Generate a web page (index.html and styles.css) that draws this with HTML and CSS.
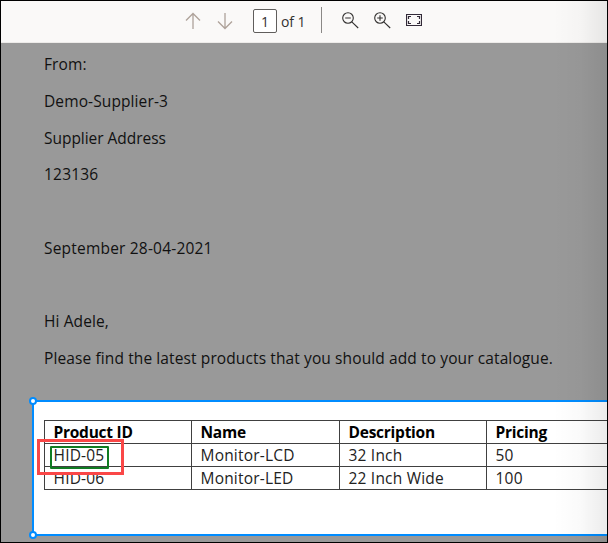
FILE: index.html
```html
<!DOCTYPE html>
<html lang="en">
<head>
<meta charset="utf-8">
<title>Document viewer</title>
<link rel="stylesheet" href="styles.css">
</head>
<body>
<div class="viewer">
  <header class="toolbar">
    <svg class="arrow" width="16" height="18" viewBox="0 0 16 18"><path d="M8 17V1.5M1 8.5l7-7 7 7"/></svg>
    <svg class="arrow down" width="16" height="18" viewBox="0 0 16 18"><path d="M8 1v15.5M1 9.5l7 7 7-7"/></svg>
    <span class="page-number">1</span>
    <span class="page-total">of 1</span>
    <span class="divider"></span>
    <svg class="tool" width="17" height="17" viewBox="0 0 17 17"><circle cx="6" cy="6" r="5.3"/><path d="M9.8 9.8l6.4 6.2M3.2 6h5.6"/></svg>
    <svg class="tool" width="17" height="17" viewBox="0 0 17 17"><circle cx="6" cy="6" r="5.3"/><path d="M9.8 9.8l6.4 6.2M3.2 6h5.6M6 3.2v5.6"/></svg>
    <svg class="tool fit" width="16" height="12" viewBox="0 0 16 12"><path d="M.5.5h15v11H.5zM2.5 5V2.5H5M11 2.5h2.500V5M13.500 7v2.500H11M5 9.500H2.500V7"/></svg>
  </header>
  <main class="document">
    <div class="letter">
      <p>From:</p>
      <p>Demo-Supplier-3</p>
      <p class="tight">Supplier Address</p>
      <p class="digits">123136</p>
      <p></p>
      <p class="digits">September 28-04-2021</p>
      <p></p>
      <p>Hi Adele,</p>
      <p>Please find the latest products that you should add to your catalogue.</p>
    </div>
    <section class="selection">
      <span class="handle top"></span><span class="handle bottom"></span>
      <div class="table">
        <b>Product ID</b><b>Name</b><b>Description</b><b>Pricing</b>
        <span>HID-05</span><span>Monitor-LCD</span><span>32 Inch</span><span>50</span>
        <span>HID-06</span><span>Monitor-LED</span><span>22 Inch Wide</span><span>100</span>
      </div>
      <div class="field"></div>
      <div class="callout"></div>
    </section>
  </main>
  <div class="shade"></div>
</div>
</body>
</html>
```
FILE: styles.css
```css
* { box-sizing: border-box; }
body { margin: 0; font-family: "Open Sans", sans-serif; font-size: 15.5px; font-weight: 400; letter-spacing: .11px; color: #000; }
.viewer { position: relative; width: 608px; height: 543px; border: 1px solid #000; overflow: hidden; background: #999; }
.toolbar { height: 42px; padding-left: 184px; display: flex; align-items: center; background: #faf9f8; border-bottom: 1px solid #edebe9; }
.toolbar svg { fill: none; flex: none; position: relative; top: -1px; }
.arrow { stroke: #aea29a; stroke-width: 1.3; }
.arrow.down { margin-left: 16px; }
.page-number { width: 24px; height: 24px; margin-left: 20px; border: 1px solid #605e5c; border-radius: 2px; background: #fff; font: 14px/23px "Open Sans", sans-serif; text-align: center; color: #323130; position: relative; top: -1px; }
.page-total { width: 25px; margin-left: 4px; font: 14px/24px "Open Sans", sans-serif; letter-spacing: -.1px; white-space: nowrap; color: #323130; }
.divider { width: 1px; height: 26px; margin-left: 15px; background: #8a8886; position: relative; top: -2px; }
.tool { stroke: #323130; stroke-width: 1.1; margin-left: 15px; }
.divider + .tool { margin-left: 20px; }
.toolbar .fit { margin-left: 15px; top: -1.5px; stroke: #322a38; stroke-width: 1.2; }
.document { height: 499px; }
.letter { height: 357px; padding: 3px 0 0 43px; }
.letter p { height: 36.75px; margin: 0; line-height: 36.75px; white-space: nowrap; color: #111; }
.letter .tight { letter-spacing: -.03px; }
.letter .digits { letter-spacing: .2px; }
.selection { position: relative; height: 136px; margin-left: 31px; padding: 18px 0 0 10px; background: #fff; border: 2px solid #008cff; border-right: 0; }
.handle { position: absolute; left: -5px; width: 8px; height: 8px; border: 2px solid #008cff; border-radius: 50%; background: #fff; }
.handle.top { top: -5px; }
.handle.bottom { bottom: -5px; }
.table { display: grid; grid-template-columns: 147px 148px 147px 148px; grid-auto-rows: 23px; width: 590px; border: solid #404040; border-width: 1px 0 0 1px; }
.table > * { padding-left: 8.5px; border: solid #404040; border-width: 0 1px 1px 0; line-height: 22px; letter-spacing: .2px; white-space: nowrap; }
.table > span { color: #222; border-color: #404040; }
.table b { font-weight: 700; letter-spacing: -.25px; }
.field { position: absolute; left: 16px; top: 44px; width: 59px; height: 23px; border: 2px solid #107c22; border-radius: 1px; }
.callout { position: absolute; left: 3px; top: 37px; width: 87px; height: 36px; border: 3px solid #fa4747; }
.shade { position: absolute; right: 0; top: 0; width: 54px; height: 100%; background: linear-gradient(90deg, transparent, rgba(0,0,0,.02) 50%, rgba(0,0,0,.08)); }
```
